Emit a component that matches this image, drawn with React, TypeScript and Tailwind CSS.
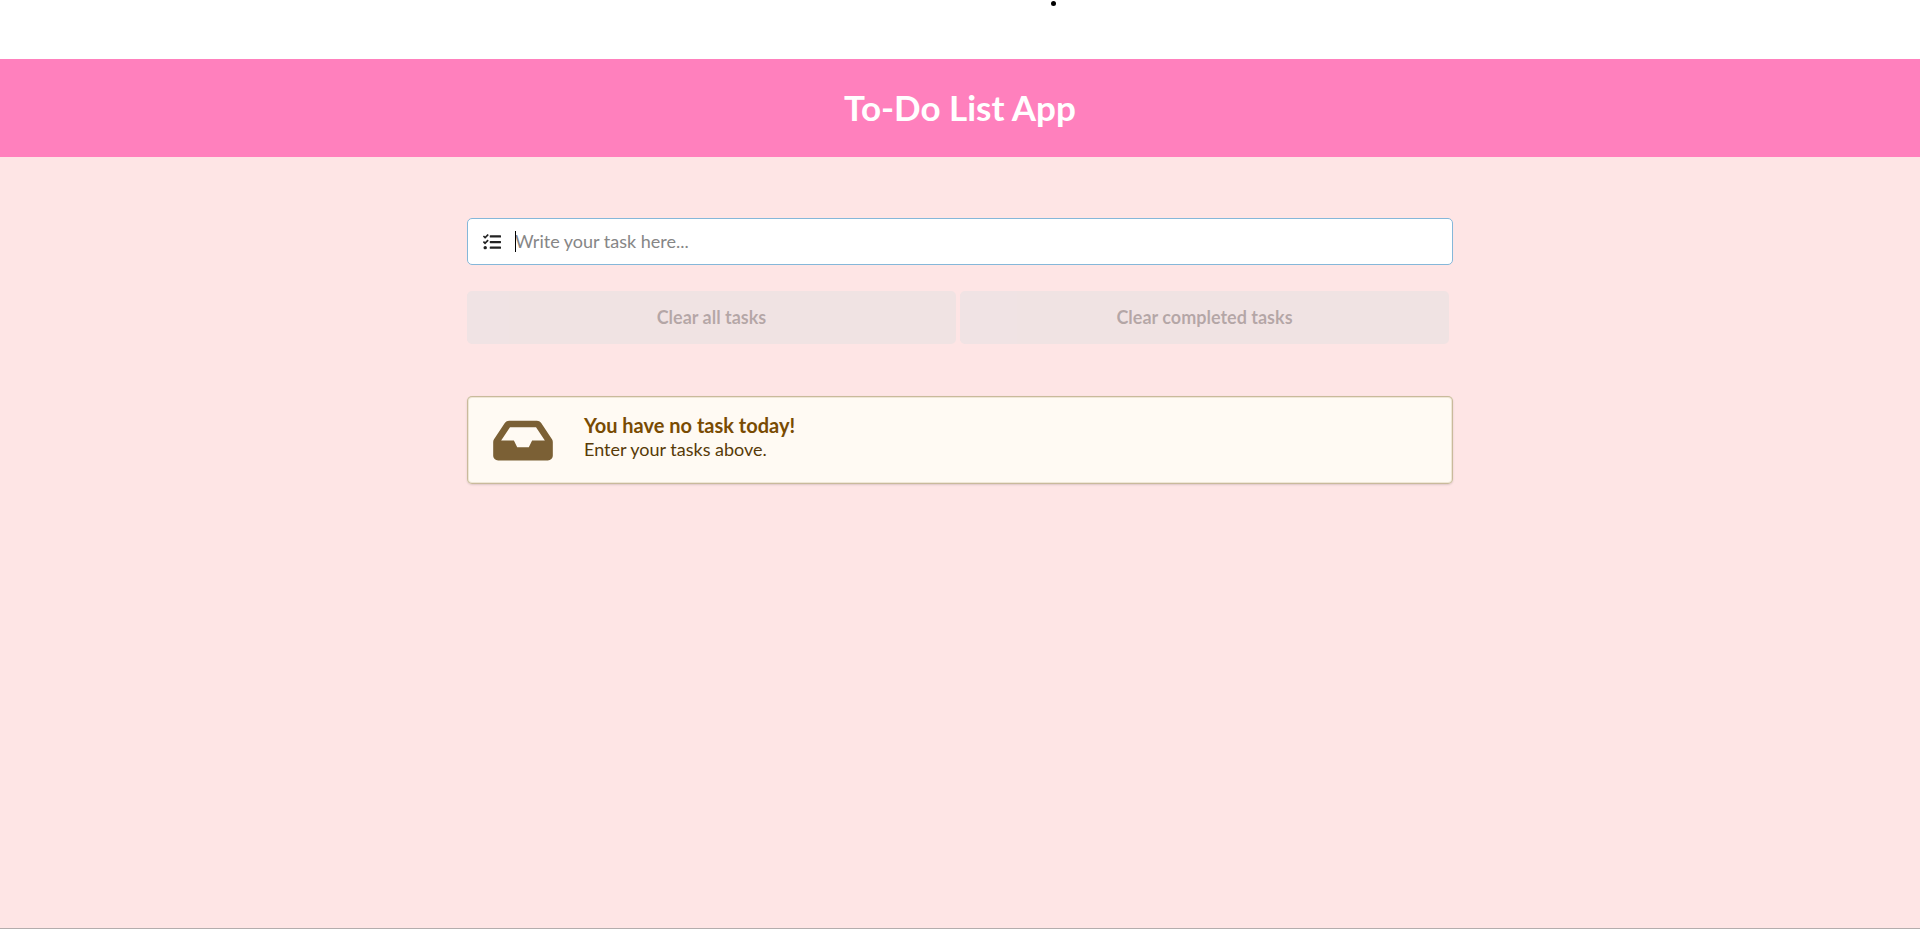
import { useState } from "react";
import { FaInbox, FaTasks } from "react-icons/fa";

function ClearButton({ label }: { label: string }) {
  return (
    <button
      type="button"
      disabled
      className="flex-1 rounded-[5px] bg-[#e0e1e2] py-[13px] text-lg leading-[27px] font-bold text-black/60 opacity-45"
    >
      {label}
    </button>
  );
}

export default function App() {
  const [task, setTask] = useState("");

  return (
    <div className="flex min-h-screen flex-col border-b border-[#b4adad] bg-[#fee5e5] font-['Lato',sans-serif]">
      <div className="flex h-[59px] justify-center bg-white">
        <span className="mt-px ml-[187px] size-[5px] rounded-full bg-black" />
      </div>
      <header className="bg-[#ff80bd] pt-[25px] pb-[27px] text-center">
        <h1 className="text-[35px] leading-[46px] font-bold text-white">To-Do List App</h1>
      </header>

      <main className="mx-auto w-full max-w-[986px] pt-[61px]">
        <div className="relative flex h-[47px] items-center rounded-[5px] border border-[#85b7d9] bg-white">
          <FaTasks aria-hidden className="ml-[15px] size-[18px] shrink-0 text-[#222222]" />
          <input
            type="text"
            aria-label="Task"
            value={task}
            onChange={(e) => setTask(e.target.value)}
            placeholder="Write your task here..."
            className="ml-[14px] h-full flex-1 pb-[2px] text-lg text-black/85 outline-none placeholder:text-[#868686]"
          />
          <span className="absolute left-[47px] h-[21px] w-px bg-black" />
        </div>

        <div className="mt-[26px] mr-1 flex gap-1">
          <ClearButton label="Clear all tasks" />
          <ClearButton label="Clear completed tasks" />
        </div>

        <section className="mt-[52px] flex h-[88px] items-center rounded-[5px] bg-[#fffaf3] px-[26px] shadow-[0_0_0_1px_#c9ba9b_inset,0_0_0_2px_#efe6d6_inset,0_1px_2px_0_rgba(34,36,38,0.15)]">
          <FaInbox aria-hidden className="h-[53px] w-[60px] shrink-0 text-[#7b6035]" />
          <div className="ml-[31px] pb-[5px]">
            <h2 className="text-xl leading-[23px] font-bold text-[#794b02]">You have no task today!</h2>
            <p className="text-lg leading-[24px] text-[#573a08]">Enter your tasks above.</p>
          </div>
        </section>
      </main>
    </div>
  );
}
